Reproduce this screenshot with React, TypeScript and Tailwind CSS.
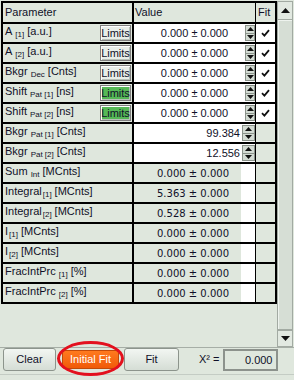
import React from 'react';

type Kind = 'fit' | 'fixed' | 'derived';

interface ParamRow {
  name: string;
  sub: string;
  gap: boolean;
  unit: string;
  kind: Kind;
  limits?: 'gray' | 'green';
  value: string;
}

const rows: ParamRow[] = [
  { name: 'A', sub: '[1]', gap: true, unit: '[a.u.]', kind: 'fit', limits: 'gray', value: '0.000 ± 0.000' },
  { name: 'A', sub: '[2]', gap: true, unit: '[a.u.]', kind: 'fit', limits: 'gray', value: '0.000 ± 0.000' },
  { name: 'Bkgr', sub: 'Dec', gap: true, unit: '[Cnts]', kind: 'fit', limits: 'gray', value: '0.000 ± 0.000' },
  { name: 'Shift', sub: 'Pat [1]', gap: true, unit: '[ns]', kind: 'fit', limits: 'green', value: '0.000 ± 0.000' },
  { name: 'Shift', sub: 'Pat [2]', gap: true, unit: '[ns]', kind: 'fit', limits: 'green', value: '0.000 ± 0.000' },
  { name: 'Bkgr', sub: 'Pat [1]', gap: true, unit: '[Cnts]', kind: 'fixed', value: '99.384' },
  { name: 'Bkgr', sub: 'Pat [2]', gap: true, unit: '[Cnts]', kind: 'fixed', value: '12.556' },
  { name: 'Sum', sub: 'Int', gap: true, unit: '[MCnts]', kind: 'derived', value: '0.000 ± 0.000' },
  { name: 'Integral', sub: '[1]', gap: false, unit: '[MCnts]', kind: 'derived', value: '5.363 ± 0.000' },
  { name: 'Integral', sub: '[2]', gap: false, unit: '[MCnts]', kind: 'derived', value: '0.528 ± 0.000' },
  { name: 'I', sub: '[1]', gap: false, unit: '[MCnts]', kind: 'derived', value: '0.000 ± 0.000' },
  { name: 'I', sub: '[2]', gap: false, unit: '[MCnts]', kind: 'derived', value: '0.000 ± 0.000' },
  { name: 'FracIntPrc', sub: '[1]', gap: true, unit: '[%]', kind: 'derived', value: '0.000 ± 0.000' },
  { name: 'FracIntPrc', sub: '[2]', gap: true, unit: '[%]', kind: 'derived', value: '0.000 ± 0.000' },
];

const Tri = ({ up }: { up?: boolean }) => (
  <svg width="7" height="4" viewBox="0 0 7 4" className="block">
    <path d={up ? 'M0 4 L3.5 0 L7 4 Z' : 'M0 0 L3.5 4 L7 0 Z'} fill="#101010" />
  </svg>
);

const Spinner = ({ wide }: { wide?: boolean }) => (
  <div className={`flex flex-col h-[16px] border border-[#8a928a] bg-[#d3dbd3] ${wide ? 'w-[13px]' : 'w-[10px]'}`}>
    <div className="flex-1 flex items-center justify-center border-b border-[#8a928a]"><Tri up /></div>
    <div className="flex-1 flex items-center justify-center"><Tri /></div>
  </div>
);

const Check = () => (
  <svg width="9" height="8" viewBox="0 0 9 8">
    <path d="M1 4.2 L3.4 6.6 L8 1.2" fill="none" stroke="#111" strokeWidth="1.8" />
  </svg>
);

const LimitsButton = ({ color }: { color: 'gray' | 'green' }) => (
  <div
    className={`w-[31px] h-[16px] flex items-center justify-center text-[11px] leading-none text-[#101028] border border-[#7e7e7e] shadow-[inset_1px_1px_0_#ffffff,inset_-1px_-1px_0_#b8c0b8] ${
      color === 'green' ? 'bg-[#56b856]' : 'bg-[#e8ede8]'
    }`}
  >
    Limits
  </div>
);

const Label = ({ row }: { row: ParamRow }) => (
  <div className="pt-[1px] text-[11px] leading-[13px] text-[#101028] whitespace-nowrap">
    {row.name}
    <span className={`text-[8px] relative top-[2px] ${row.gap ? 'ml-[3px]' : 'ml-[1px]'}`}>{row.sub}</span>
    <span className="ml-[3px]">{row.unit}</span>
  </div>
);

const TableRow = ({ row }: { row: ParamRow }) => (
  <div className="flex h-[20px] border-b-2 border-black">
    <div className="w-[131px] flex justify-between items-start pl-[2px] pr-[1px] border-r-2 border-black">
      <Label row={row} />
      {row.limits && <div className="pt-[1px]"><LimitsButton color={row.limits} /></div>}
    </div>
    {row.kind === 'fit' && (
      <div className="w-[122px] flex items-center bg-white border-r border-black">
        <div className="flex-1 text-right pr-[17px] text-[11px] text-[#101028]">{row.value}</div>
        <Spinner />
      </div>
    )}
    {row.kind === 'fixed' && (
      <div className="w-[122px] flex items-center bg-white border-r border-black">
        <div className="flex-1 text-right pr-[2px] text-[11px] text-[#101028]">{row.value}</div>
        <Spinner wide />
      </div>
    )}
    {row.kind === 'derived' && (
      <div className="w-[122px] flex border-r border-black">
        <div className="flex-1 flex items-center pl-[23px] text-[10px] text-[#101028] font-['DejaVu_Sans',sans-serif] whitespace-nowrap">
          {row.value}
        </div>
        <div className="w-[14px] bg-white" />
      </div>
    )}
    <div className={`w-[19px] flex items-center justify-center ${row.kind === 'fit' ? 'bg-white' : ''}`}>
      {row.kind === 'fit' && <Check />}
    </div>
  </div>
);

const Scrollbar = () => (
  <div className="w-[16px] h-[346px] mt-[1px] flex flex-col bg-[#d2dad2]">
    <div className="h-[19px] flex items-center justify-center border border-[#a2aaa2] bg-[#e2e9e1]">
      <svg width="9" height="5" viewBox="0 0 9 5"><path d="M0 5 L4.5 0 L9 5 Z" fill="#111" /></svg>
    </div>
    <div className="flex-1 border border-[#a2aaa2] border-t-0 bg-[#d6ded5] shadow-[inset_1px_1px_0_#eef3ee]" />
    <div className="h-[17px] flex items-center justify-center border border-[#a2aaa2] bg-[#e2e9e1]">
      <svg width="9" height="5" viewBox="0 0 9 5"><path d="M0 0 L4.5 5 L9 0 Z" fill="#111" /></svg>
    </div>
  </div>
);

const App = () => {
  return (
    <div className="w-[294px] h-[380px] relative overflow-hidden bg-[#dfe7dd] font-['Liberation_Sans',Arial,sans-serif] text-[#101028]">
      <div className="flex h-[347px]">
        <div className="w-[277px]">
          <div className="w-[276px] ml-[1px] mt-[1px] border-x-2 border-t-2 border-black">
            <div className="flex h-[21px] border-b-2 border-black text-[11px]">
              <div className="w-[131px] flex items-center pl-[2px] border-r-2 border-black">Parameter</div>
              <div className="w-[122px] flex items-center pl-[1px] border-r border-black">Value</div>
              <div className="w-[19px] flex items-center pl-[2px]">Fit</div>
            </div>
            {rows.map((r, i) => (
              <TableRow key={i} row={r} />
            ))}
          </div>
        </div>
        <Scrollbar />
      </div>
      <div className="h-px bg-[#a6aea6]" />
      <div className="flex items-start h-[26px] text-[11px]">
        <div className="ml-[3px] w-[53px] h-[23px] flex items-center justify-center rounded-[3px] border border-[#8c948c] bg-gradient-to-b from-[#f2f6f2] to-[#d5ddd5]">
          Clear
        </div>
        <div className="ml-[6px] mt-[2px] w-[57px] h-[19px] flex items-center justify-center rounded-[3px] border border-[#c24a08] bg-gradient-to-b from-[#ff7a1e] to-[#f05a08] text-white">
          Initial Fit
        </div>
        <div className="ml-[5px] w-[55px] h-[23px] flex items-center justify-center rounded-[3px] border border-[#8c948c] bg-gradient-to-b from-[#f2f6f2] to-[#d5ddd5]">
          Fit
        </div>
        <div className="ml-[20px] h-[23px] flex items-center">X² =</div>
        <div className="ml-[4px] mt-[1px] w-[55px] h-[22px] flex items-center justify-end pr-[4px] border-2 border-[#8c928c]">
          0.000
        </div>
      </div>
      <div className="h-px bg-[#c4ccc4]" />
      <div className="absolute left-[57px] top-[341px] w-[67px] h-[35px] rounded-[50%] border-[3px] border-[#e3101e]" />
    </div>
  );
};

export default App;
